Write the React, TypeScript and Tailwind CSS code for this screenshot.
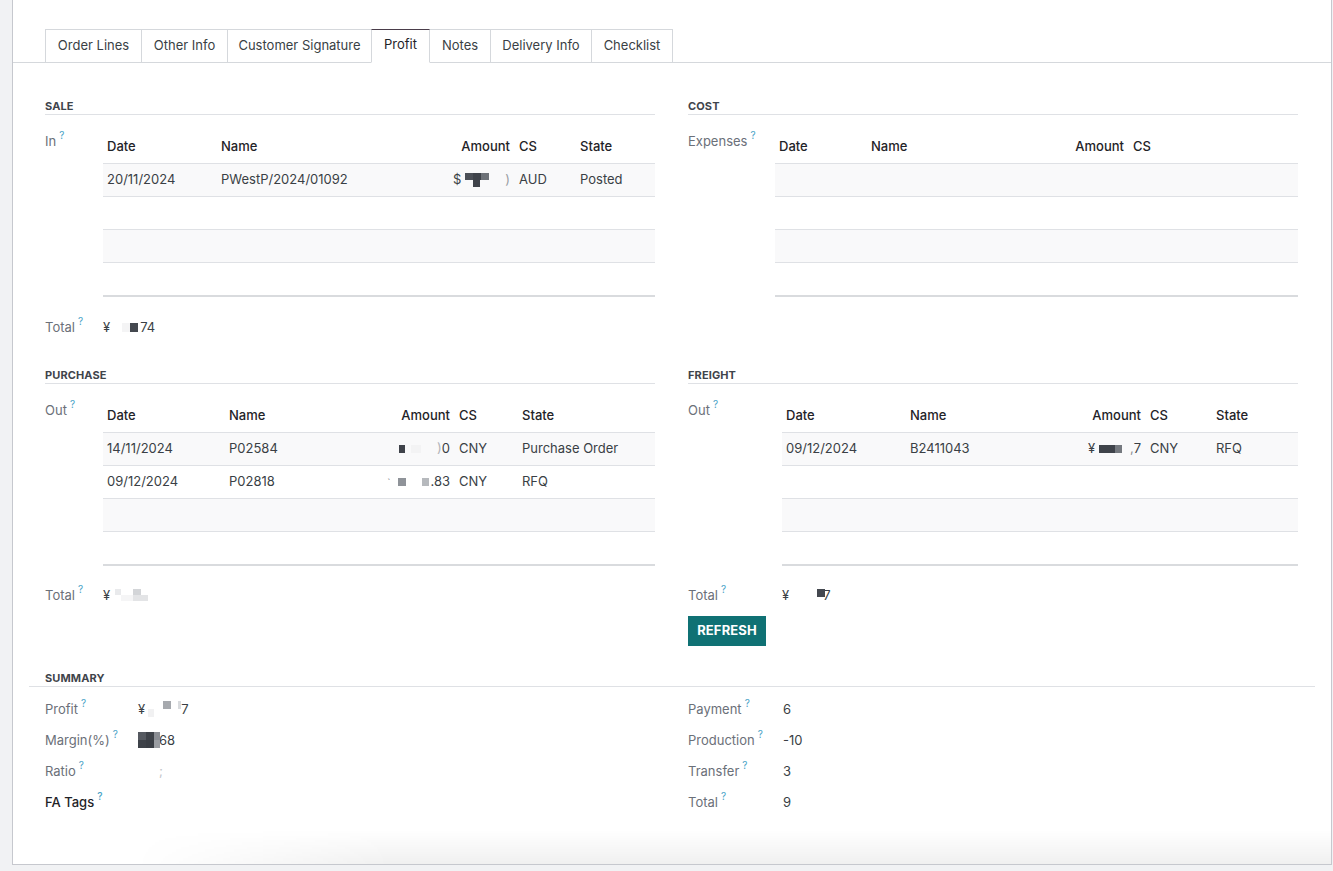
import React from "react";

const Q = () => (
  <span className="ml-[3px] align-top text-[10px] leading-[10px] text-[#4aa3c7] relative top-[-2px]">?</span>
);

function SectionHead({ title }: { title: string }) {
  return (
    <div className="h-[22px] border-b border-[#dfe1e5] flex items-end pb-[1px] text-[11px] leading-[14px] font-bold tracking-[0.01em] text-[#3f444b] uppercase">
      {title}
    </div>
  );
}

type Cell = React.ReactNode;

function DataTable({
  template,
  headers,
  rightIdx,
  rows,
}: {
  template: string;
  headers: string[];
  rightIdx: number;
  rows: Cell[][];
}) {
  const all: (Cell[] | null)[] = [...rows];
  while (all.length < 4) all.push(null);
  return (
    <div className="flex-1 min-w-0">
      <div className={`grid ${template} h-[33px] items-center border-b border-[#dfe1e5] text-[13px] font-medium text-[#1f2328]`}>
        {headers.map((h, i) => (
          <div key={i} className={`px-[4px] ${i === rightIdx ? "text-right" : ""} ${i === rightIdx + 1 ? "pl-[5px]" : ""}`}>
            {h}
          </div>
        ))}
      </div>
      {all.map((r, ri) => (
        <div
          key={ri}
          className={`grid ${template} items-center text-[13px] text-[#3a3f45] ${
            ri % 2 === 0 ? "bg-[#f9f9fa]" : "bg-white"
          } ${ri === all.length - 1 ? "border-b-2 border-[#d9dbde] h-[34px]" : "border-b border-[#dfe1e5] h-[33px]"}`}
        >
          {r
            ? r.map((c, ci) => (
                <div
                  key={ci}
                  className={`px-[4px] whitespace-nowrap ${ci === rightIdx ? "flex justify-end items-center" : ""} ${
                    ci === rightIdx + 1 ? "pl-[5px]" : ""
                  }`}
                >
                  {c}
                </div>
              ))
            : null}
        </div>
      ))}
    </div>
  );
}

function Blk({ w, h, c, dy = 0, mx = 0 }: { w: number; h: number; c: string; dy?: number; mx?: number }) {
  return (
    <span
      className="inline-block"
      style={{ width: w, height: h, background: c, transform: `translateY(${dy}px)`, marginLeft: mx }}
    />
  );
}

function Field({
  label,
  labelW,
  children,
  dark,
}: {
  label: string;
  labelW: string;
  children?: React.ReactNode;
  dark?: boolean;
}) {
  return (
    <div className="flex">
      <div className={`${labelW} shrink-0 text-[13px] leading-[18px] ${dark ? "text-[#1f2328] font-medium" : "text-[#6b7079]"}`}>
        {label}
        <Q />
      </div>
      {children}
    </div>
  );
}

export default function App() {
  const tabs = [
    ["Order Lines", "w-[97px]"],
    ["Other Info", "w-[87px]"],
    ["Customer Signature", "w-[145px]"],
    ["Profit", "w-[59px]"],
    ["Notes", "w-[62px]"],
    ["Delivery Info", "w-[102px]"],
    ["Checklist", "w-[82px]"],
  ];

  return (
    <div
      className="w-[1333px] h-[871px] bg-[#f1f2f4] pl-[12px] overflow-hidden"
      style={{ fontFamily: "Inter, Roboto, 'Noto Sans', Arial, sans-serif" }}
    >
      <div className="w-[1320px] h-[865px] bg-white border-l border-r border-b border-[#c6c8ce] flex flex-col">
        {/* tabs */}
        <div className="h-[63px] border-b border-[#d5d8dc] pl-[32px] pt-[29px] flex items-start">
          {tabs.map(([t, w], i) => {
            const active = t === "Profit";
            return (
              <div
                key={t}
                className={`${w} h-[34px] pb-[2px] ${i > 0 ? "-ml-px" : ""} flex items-center justify-center text-[13px] border-l border-r ${
                  active
                    ? "border-t-[#4a3d4a] border-t border-b border-b-white border-l-[#d5d8dc] border-r-[#d5d8dc] text-[#1f2328] relative z-10"
                    : "border-t border-[#d5d8dc] text-[#3a3f45]"
                }`}
              >
                {t}
              </div>
            );
          })}
        </div>

        {/* body */}
        <div className="px-[32px]">
          <div className="grid grid-cols-[610px_610px] gap-x-[33px]">
            {/* SALE */}
            <div className="mt-[30px]">
              <SectionHead title="Sale" />
              <div className="flex mt-[16px]">
                <div className="w-[58px] shrink-0 text-[13px] leading-[18px] text-[#6b7079] pt-[1px]">
                  In
                  <Q />
                </div>
                <DataTable
                  template="grid-cols-[114px_213px_84px_62px_1fr]"
                  headers={["Date", "Name", "Amount", "CS", "State"]}
                  rightIdx={2}
                  rows={[
                    [
                      "20/11/2024",
                      "PWestP/2024/01092",
                      <span className="flex items-center">
                        $
                        <span className="inline-flex flex-col ml-[4px]">
                          <span className="flex">
                            <Blk w={8} h={7} c="#4c5057" />
                            <Blk w={8} h={7} c="#3f434a" />
                            <Blk w={8} h={7} c="#6e7278" />
                          </span>
                          <Blk w={7} h={7} c="#3f434a" mx={8} />
                        </span>
                        <span className="ml-[16px] text-[#9a9ea4]">)</span>
                      </span>,
                      "AUD",
                      "Posted",
                    ],
                  ]}
                />
              </div>
              <div className="mt-[21px]">
                <Field label="Total" labelW="w-[58px]">
                  <span className="text-[13px] leading-[18px] text-[#3a3f45] flex items-center">
                    ¥<Blk w={8} h={9} c="#f4f4f5" mx={12} />
                    <Blk w={8} h={9} c="#44484f" />
                    <span className="ml-[2px]">74</span>
                  </span>
                </Field>
              </div>
            </div>

            {/* COST */}
            <div className="mt-[30px]">
              <SectionHead title="Cost" />
              <div className="flex mt-[16px]">
                <div className="w-[87px] shrink-0 text-[13px] leading-[18px] text-[#6b7079] pt-[1px]">
                  Expenses
                  <Q />
                </div>
                <DataTable
                  template="grid-cols-[92px_183px_78px_1fr]"
                  headers={["Date", "Name", "Amount", "CS"]}
                  rightIdx={2}
                  rows={[]}
                />
              </div>
            </div>

            {/* PURCHASE */}
            <div className="mt-[26px]">
              <SectionHead title="Purchase" />
              <div className="flex mt-[16px]">
                <div className="w-[58px] shrink-0 text-[13px] leading-[18px] text-[#6b7079] pt-[1px]">
                  Out
                  <Q />
                </div>
                <DataTable
                  template="grid-cols-[122px_155px_74px_64px_1fr]"
                  headers={["Date", "Name", "Amount", "CS", "State"]}
                  rightIdx={2}
                  rows={[
                    [
                      "14/11/2024",
                      "P02584",
                      <span className="flex items-center">
                        <Blk w={6} h={8} c="#3f434a" />
                        <Blk w={10} h={8} c="#f3f3f4" mx={6} />
                        <span className="ml-[16px]">
                          <span className="text-[#b0b3b8]">)</span>0
                        </span>
                      </span>,
                      "CNY",
                      "Purchase Order",
                    ],
                    [
                      "09/12/2024",
                      "P02818",
                      <span className="flex items-center">
                        <span className="text-[#8a8e94] text-[10px]">`</span>
                        <Blk w={8} h={8} c="#8f9399" mx={8} />
                        <Blk w={7} h={8} c="#b6b9bd" mx={16} />
                        <span className="ml-[1px]">.83</span>
                      </span>,
                      "CNY",
                      "RFQ",
                    ],
                  ]}
                />
              </div>
              <div className="mt-[20px]">
                <Field label="Total" labelW="w-[58px]">
                  <span className="text-[13px] leading-[18px] text-[#3a3f45] flex items-center">
                    ¥
                    <span className="inline-flex flex-col ml-[5px]">
                      <span className="flex">
                        <Blk w={6} h={6} c="#e9eaec" />
                        <Blk w={6} h={6} c="#ffffff" />
                        <Blk w={8} h={6} c="#d3d5d8" mx={6} />
                      </span>
                      <span className="flex">
                        <Blk w={6} h={6} c="#ffffff" />
                        <Blk w={12} h={6} c="#f5f5f6" />
                        <Blk w={15} h={6} c="#e3e4e6" />
                      </span>
                    </span>
                  </span>
                </Field>
              </div>
            </div>

            {/* FREIGHT */}
            <div className="mt-[26px]">
              <SectionHead title="Freight" />
              <div className="flex mt-[16px]">
                <div className="w-[94px] shrink-0 text-[13px] leading-[18px] text-[#6b7079] pt-[1px]">
                  Out
                  <Q />
                </div>
                <DataTable
                  template="grid-cols-[124px_164px_75px_67px_1fr]"
                  headers={["Date", "Name", "Amount", "CS", "State"]}
                  rightIdx={2}
                  rows={[
                    [
                      "09/12/2024",
                      "B2411043",
                      <span className="flex items-center">
                        ¥
                        <Blk w={16} h={8} c="#3f434a" mx={4} />
                        <Blk w={7} h={8} c="#75797f" />
                        <span className="ml-[8px]">
                          <span className="text-[#8a8e94]">,</span>7
                        </span>
                      </span>,
                      "CNY",
                      "RFQ",
                    ],
                  ]}
                />
              </div>
              <div className="mt-[20px]">
                <Field label="Total" labelW="w-[94px]">
                  <span className="text-[13px] leading-[18px] text-[#3a3f45] flex items-center">
                    ¥
                    <Blk w={8} h={8} c="#44484f" mx={28} dy={-2} />
                    <span className="-ml-[2px]">7</span>
                  </span>
                </Field>
              </div>
              <button className="mt-[12px] w-[78px] h-[30px] bg-[#0f7174] text-white text-[13px] font-bold tracking-[0.01em] flex items-center justify-center">
                REFRESH
              </button>
            </div>
          </div>
        </div>

        {/* SUMMARY */}
        <div className="mt-[25px] mx-[16px]">
          <div className="pl-[16px]">
            <div className="text-[11px] leading-[14px] font-bold tracking-[0.01em] text-[#3f444b] uppercase pb-[1px]">
              Summary
            </div>
          </div>
          <div className="border-b border-[#dfe1e5]" />
        </div>
        <div className="px-[32px] mt-[6px] grid grid-cols-[610px_610px] gap-x-[33px]">
          <div className="flex flex-col">
            <div className="h-[31px] flex items-center">
              <Field label="Profit" labelW="w-[93px]">
                <span className="text-[13px] leading-[18px] text-[#3a3f45] flex items-center">
                  ¥<Blk w={6} h={8} c="#f1f1f2" mx={3} dy={4} />
                  <Blk w={8} h={8} c="#a6a9ae" mx={9} dy={-4} />
                  <Blk w={3} h={8} c="#d9dbde" mx={7} dy={-4} />
                  <span>7</span>
                </span>
              </Field>
            </div>
            <div className="h-[31px] flex items-center">
              <Field label="Margin(%)" labelW="w-[93px]">
                <span className="text-[13px] leading-[18px] text-[#3a3f45] flex items-center">
                  <span className="inline-flex flex-col">
                    <span className="flex">
                      <Blk w={8} h={8} c="#555960" />
                      <Blk w={8} h={8} c="#3e4249" />
                      <Blk w={6} h={8} c="#8a8d93" />
                    </span>
                    <span className="flex">
                      <Blk w={8} h={8} c="#3e4249" />
                      <Blk w={8} h={8} c="#3a3e45" />
                      <Blk w={6} h={8} c="#9a9da2" />
                    </span>
                  </span>
                  <span className="-ml-[1px]">68</span>
                </span>
              </Field>
            </div>
            <div className="h-[31px] flex items-center">
              <Field label="Ratio" labelW="w-[93px]">
                <span className="text-[13px] leading-[18px] text-[#c2c4c8] pl-[21px]">;</span>
              </Field>
            </div>
            <div className="h-[31px] flex items-center">
              <Field label="FA Tags" labelW="w-[93px]" dark />
            </div>
          </div>
          <div className="flex flex-col">
            {[
              ["Payment", "6"],
              ["Production", "-10"],
              ["Transfer", "3"],
              ["Total", "9"],
            ].map(([l, v]) => (
              <div key={l} className="h-[31px] flex items-center">
                <Field label={l} labelW="w-[95px]">
                  <span className="text-[13px] leading-[18px] text-[#3a3f45]">{v}</span>
                </Field>
              </div>
            ))}
          </div>
        </div>

        <div className="mt-auto h-[34px] bg-[linear-gradient(to_bottom,rgba(0,0,0,0),rgba(0,0,0,0.06))] [mask-image:linear-gradient(to_right,transparent_120px,black_380px)]" />
      </div>
    </div>
  );
}
